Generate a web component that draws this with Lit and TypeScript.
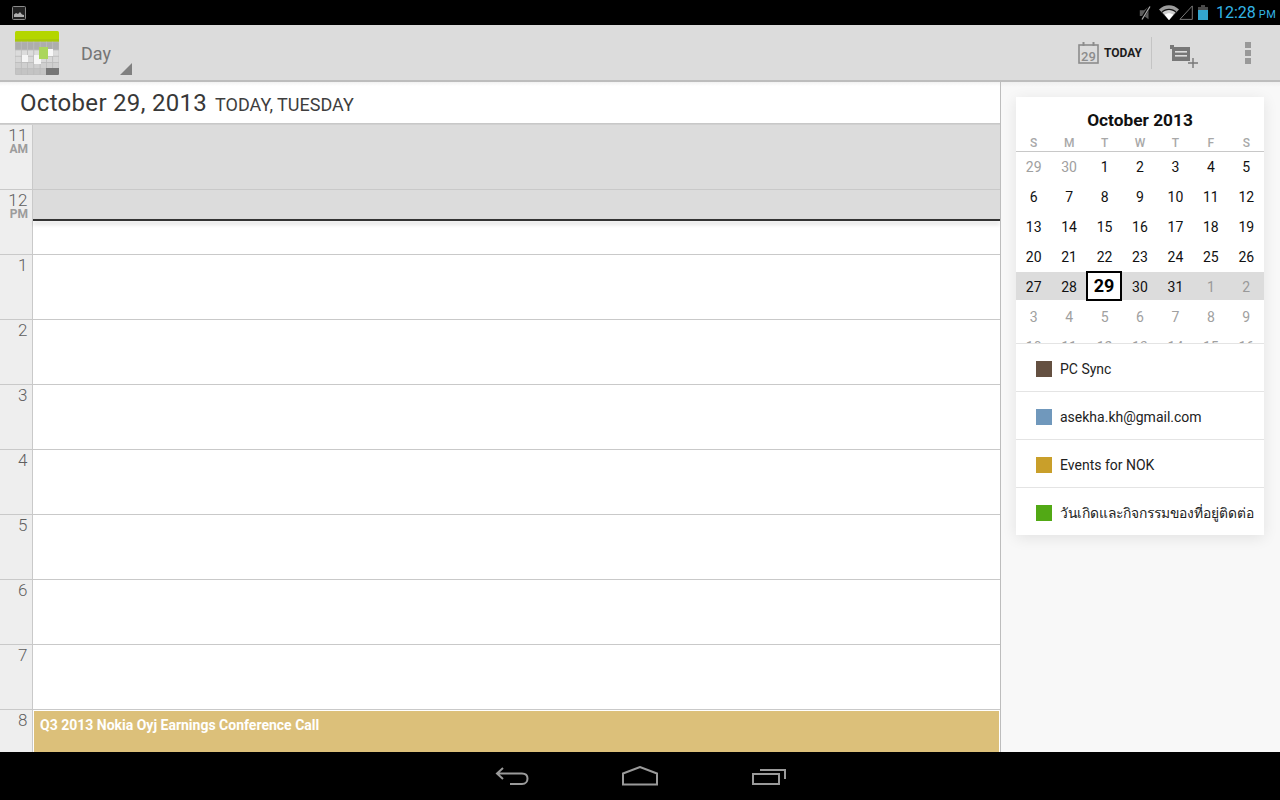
import { LitElement, html, css, svg } from "lit";
import { customElement } from "lit/decorators.js";

const HOURS: [string, string][] = [["11","AM"],["12","PM"],["1",""],["2",""],["3",""],["4",""],["5",""],["6",""],["7",""]];
const WEEK = ["S","M","T","W","T","F","S"];
type Cell = { d: number; dim?: boolean; today?: boolean };
const cells = (from: number, to: number, dim = false): Cell[] => {
  const out: Cell[] = [];
  for (let i = from; i <= to; i++) out.push({ d: i, dim });
  return out;
};
const ROWS: Cell[][] = [
  [...cells(29, 30, true), ...cells(1, 5)],
  cells(6, 12), cells(13, 19), cells(20, 26),
  [...cells(27, 28), { d: 29, today: true }, ...cells(30, 31), ...cells(1, 2, true)],
  cells(3, 9, true), cells(10, 16, true),
];
const CALS = [
  ["PC Sync", "#645041", ""],
  ["asekha.kh@gmail.com", "#7098bc", ""],
  ["Events for NOK", "#c99f2a", ""],
  ["วันเกิดและกิจกรรมของที่อยู่ติดต่อ", "#52a915", "thai"],
];

const LOGO_ROWS = ["#adadad", "#dcdcdc", "#d8d8d8", "#cfcfcf", "#c4c4c4"];
const logoCells = () => {
  const out = [];
  const heights = [8, 6.25, 6.25, 6.25, 6.25];
  let y = 11;
  for (let r = 0; r < 5; r++) {
    for (let c = 0; c < 7; c++) {
      out.push(svg`<rect x=${c * 6.29} y=${y} width="6.29" height=${heights[r]} fill=${LOGO_ROWS[r]} stroke="#bbbbbb" stroke-width=".7"/>`);
    }
    y += heights[r];
  }
  return out;
};

@customElement("app-root")
export class AppRoot extends LitElement {
  static styles = css`
    :host { display: block; width: 1280px; height: 800px; font-family: Roboto, "Noto Sans", sans-serif; overflow: hidden; background: #fff; }
    .app { display: flex; flex-direction: column; height: 800px; }
    svg { display: block; flex: none; }

    .status { height: 25px; background: #000; display: flex; align-items: center; padding: 0 6px 0 12px; flex: none; }
    .status .spacer { flex: 1; }
    .clock { color: #33b5e5; font-size: 16px; margin-left: 8px; width: 58px; white-space: nowrap; }
    .clock small { font-size: 11px; margin-left: 3px; letter-spacing: .4px; }
    .s-gap1 { margin-left: 7px; }
    .s-gap3 { margin-left: 5px; }

    .bar { height: 55px; flex: none; background: #dcdcdc; border-bottom: 2px solid #bdbdbd; display: flex; align-items: center; padding-left: 15px; }
    .mode { position: relative; width: 52px; height: 44px; margin-left: 22px; color: #757575; font-size: 18px; line-height: 46px; }
    .mode svg { position: absolute; left: 39px; top: 32px; }
    .bar .spacer { flex: 1; }
    .today { font-size: 12px; font-weight: 700; color: #1c1c1c; margin-left: 5px; }
    .vline { width: 1px; height: 32px; background: #c4c4c4; margin-left: 9px; }
    .addicon { margin-left: 18px; margin-top: 8px; }
    .dots { display: flex; flex-direction: column; gap: 2px; margin-left: 47px; margin-right: 29px; }
    .dots i { display: block; width: 6px; height: 6px; background: #999; }

    .main { flex: 1; min-height: 0; display: flex; }
    .day { width: 1000px; flex: none; display: flex; flex-direction: column; border-right: 1px solid #bdbdbd; box-sizing: content-box; }
    .dayhead { height: 41px; flex: none; display: flex; align-items: baseline; padding-left: 20px; line-height: 43px; color: #383838; border-bottom: 1px solid #c8c8c8; background: linear-gradient(#f2f2f2, #fff 4px); }
    .dayhead b { font-weight: 400; font-size: 24px; letter-spacing: .3px; }
    .dayhead span { font-size: 18px; margin-left: 8px; color: #3e3e3e; }

    .grid { flex: 1; min-height: 0; overflow: hidden; position: relative; border-top: 1px solid #d0d0d0; }
    .row { display: flex; height: 65px; box-sizing: border-box; border-bottom: 1px solid #c9c9c9; }
    .row.last { border-bottom: 0; }
    .gut { width: 32px; flex: none; background: #eee; border-right: 1px solid #c9c9c9; box-sizing: content-box; color: #5f5f5f; text-align: right; display: flex; flex-direction: column; }
    .gut .n { font-size: 17px; font-weight: 300; line-height: 18px; padding: 1px 4px 0 0; letter-spacing: .5px; }
    .gut .m { font-size: 12px; font-weight: 700; color: #9c9c9c; line-height: 10px; padding-right: 4px; }
    .cell { flex: 1; }
    .row.past .cell { background: #dcdcdc; }
    .nowfill { position: absolute; left: 33px; right: 0; top: 65px; height: 29px; background: #dcdcdc; }
    .nowline { position: absolute; left: 33px; right: 0; top: 94px; height: 2px; background: #333; box-shadow: 0 3px 4px rgba(0,0,0,.2); }
    .event { margin: 1px 1px 0 1px; height: 100%; background: #dcc07a; color: #fff; font-size: 14px; font-weight: 700; padding: 6px 0 0 6px; box-sizing: border-box; line-height: 16px; }

    .side { flex: 1; background: linear-gradient(#efefef, #f8f8f8 5px); padding: 15px 16px 0 15px; }
    .card { background: #fff; box-shadow: 0 3px 14px rgba(0,0,0,.09); }
    .title { text-align: center; font-size: 17.3px; font-weight: 700; color: #111; line-height: 22px; padding: 12px 0 1px; }
    .wk, .wrow { display: grid; grid-template-columns: repeat(7, 1fr); text-align: center; }
    .wk { font-size: 12px; font-weight: 500; color: #a8a8a8; line-height: 16px; height: 20px; padding-top: 3px; border-bottom: 1px solid #c8c8c8; box-sizing: border-box; }
    .dates { height: 191px; overflow: hidden; }
    .wrow { height: 30px; font-size: 14px; color: #111; line-height: 30px; }
    .wrow .dim { color: #a0a0a0; }
    .wrow.cur { background: linear-gradient(#dcdcdc 28px, #fff 28px); }
    .wrow.cur .dim { color: #999; }
    .todaybox { font-size: 18px; font-weight: 700; color: #000; border: 2px solid #000; background: #fff; width: 36px; height: 30px; box-sizing: border-box; line-height: 25px; justify-self: start; margin: -1px 0 0 -.86px; }
    .cal { height: 48px; box-sizing: border-box; border-top: 1px solid #e4e4e4; display: flex; align-items: center; padding: 3px 0 0 20px; font-size: 14px; color: #222; white-space: nowrap; }
    .cal i { display: block; width: 16px; height: 16px; margin-right: 8px; flex: none; }
    .cal.thai { font-size: 13.85px; }

    .nav { height: 48px; flex: none; background: #000; display: flex; align-items: center; padding-left: 495px; }
    .nav .home { margin-left: 93px; }
    .nav .rec { margin-left: 94px; }
  `;

  render() {
    return html`<div class="app">
      <div class="status">
        <svg width="14" height="14" viewBox="0 0 14 14"><rect x=".5" y=".5" width="13" height="13" rx="1" fill="#222" stroke="#8a8a8a"/><path d="M2 11V8.5l2-1.5 2 1 2-2 2 2.5 2 .5V11z" fill="#b0b0b0"/></svg>
        <div class="spacer"></div>
        <svg width="13" height="14" viewBox="0 0 13 14"><path d="M9.5 .8V13.2L5 10H.8V4.2H5z" fill="#5c5c5c"/><path d="M10.5 .5L2.5 13.5" stroke="#000" stroke-width="2.6"/><path d="M11 .5L3 13.5" stroke="#a8a8a8" stroke-width="1.3"/></svg>
        <svg class="s-gap1" width="20" height="15" viewBox="0 0 20 15"><path d="M0 4.6C5.6-1.2 14.4-1.2 20 4.6L10 15z" fill="#9c9c9c"/><path d="M2.4 7C6.6 2.7 13.4 2.7 17.6 7L10 15z" fill="#111"/><path d="M3.4 7.6C7.1 4 12.9 4 16.6 7.6L10 15z" fill="#cfcfcf"/><path d="M5.8 9.8C8.3 7.8 11.7 7.8 14.2 9.8L10 15z" fill="#fff"/></svg>
        <svg width="14" height="15" viewBox="0 0 14 15"><path d="M13.3 .9V14.4H.9z" fill="none" stroke="#777" stroke-width="1"/></svg>
        <svg class="s-gap3" width="10" height="15" viewBox="0 0 10 15"><rect x="3" y="0" width="4" height="2" fill="#4a4a4a"/><rect x="0" y="2" width="10" height="3" fill="#4a4a4a"/><rect x="0" y="5" width="10" height="10" fill="#33a5cf"/></svg>
        <div class="clock">12:28<small>PM</small></div>
      </div>

      <div class="bar">
        <svg width="44" height="44" viewBox="0 0 44 44">
          <defs><clipPath id="lc"><rect width="44" height="44" rx="1.5"/></clipPath></defs>
          <g clip-path="url(#lc)">
            <rect width="44" height="11" fill="#b4d600"/>
            <rect y="8" width="44" height="3" fill="#a9c80a"/>
            ${logoCells()}
            <rect x="31" y="37" width="13" height="7" fill="#767676"/>
            <rect x="7" y="24" width="6" height="7" fill="#f5f5f5"/>
            <rect x="19" y="24" width="7" height="9" fill="#f5f5f5"/>
            <rect x="33" y="18" width="5" height="7" fill="#f8f8f8"/>
            <rect x="24" y="16" width="9" height="12" fill="#abd65c"/>
          </g>
        </svg>
        <div class="mode">Day<svg width="12" height="12" viewBox="0 0 12 12"><path d="M12 0V12H0z" fill="#808080"/></svg></div>
        <div class="spacer"></div>
        <svg width="21" height="22" viewBox="0 0 21 22"><rect x="1" y="3" width="19" height="18" fill="none" stroke="#8c8c8c" stroke-width="1.6"/><rect x="4.5" y="0" width="2" height="4" fill="#8c8c8c"/><rect x="14.5" y="0" width="2" height="4" fill="#8c8c8c"/><text x="10.5" y="18.5" text-anchor="middle" font-family="Roboto" font-size="13" font-weight="500" fill="#8c8c8c">29</text></svg>
        <span class="today">TODAY</span>
        <div class="vline"></div>
        <svg class="addicon" width="28" height="23" viewBox="0 0 28 23"><rect x="0" y="0" width="4" height="4" fill="#777"/><rect x="2" y="2" width="18" height="14" fill="#777"/><rect x="5" y="6" width="12" height="1.6" fill="#dcdcdc"/><rect x="5" y="10" width="12" height="1.6" fill="#dcdcdc"/><path d="M23 13V23M18 18H28" stroke="#777" stroke-width="1.4"/></svg>
        <div class="dots"><i></i><i></i><i></i></div>
      </div>

      <div class="main">
        <div class="day">
          <div class="dayhead"><b>October 29, 2013</b><span>TODAY, TUESDAY</span></div>
          <div class="grid">
            ${HOURS.map(([n, m], i) => html`<div class="row ${i === 0 ? "past" : ""}">
              <div class="gut"><div class="n">${n}</div>${m ? html`<div class="m">${m}</div>` : ""}</div>
              <div class="cell"></div>
            </div>`)}
            <div class="row last">
              <div class="gut"><div class="n">8</div></div>
              <div class="cell"><div class="event">Q3 2013 Nokia Oyj Earnings Conference Call</div></div>
            </div>
            <div class="nowfill"></div>
            <div class="nowline"></div>
          </div>
        </div>
        <div class="side">
          <div class="card">
            <div class="title">October 2013</div>
            <div class="wk">${WEEK.map((w) => html`<div>${w}</div>`)}</div>
            <div class="dates">
              ${ROWS.map((r, i) => html`<div class="wrow ${i === 4 ? "cur" : ""}">
                ${r.map((c) => html`<div class="${c.dim ? "dim" : ""} ${c.today ? "todaybox" : ""}">${c.d}</div>`)}
              </div>`)}
            </div>
            ${CALS.map(([name, color, cls]) => html`<div class="cal ${cls}"><i style="background:${color}"></i>${name}</div>`)}
          </div>
        </div>
      </div>

      <div class="nav">
        <svg width="34" height="20" viewBox="0 0 34 20" fill="none" stroke="#9a9a9a" stroke-width="2"><path d="M8 2L2 7.5 8 13M2 7.5H27C31 7.5 32.5 10 32.5 12.5S31 18 27 18H15"/></svg>
        <svg class="home" width="36" height="20" viewBox="0 0 36 20" fill="none" stroke="#9a9a9a" stroke-width="2"><path d="M1 18.5V7.5L18 1 35 7.5V18.5z"/></svg>
        <svg class="rec" width="35" height="18" viewBox="0 0 35 18" fill="none" stroke="#9a9a9a" stroke-width="2"><rect x="1" y="7" width="26" height="10"/><path d="M8 3H33V12" /></svg>
      </div>
    </div>`;
  }
}
